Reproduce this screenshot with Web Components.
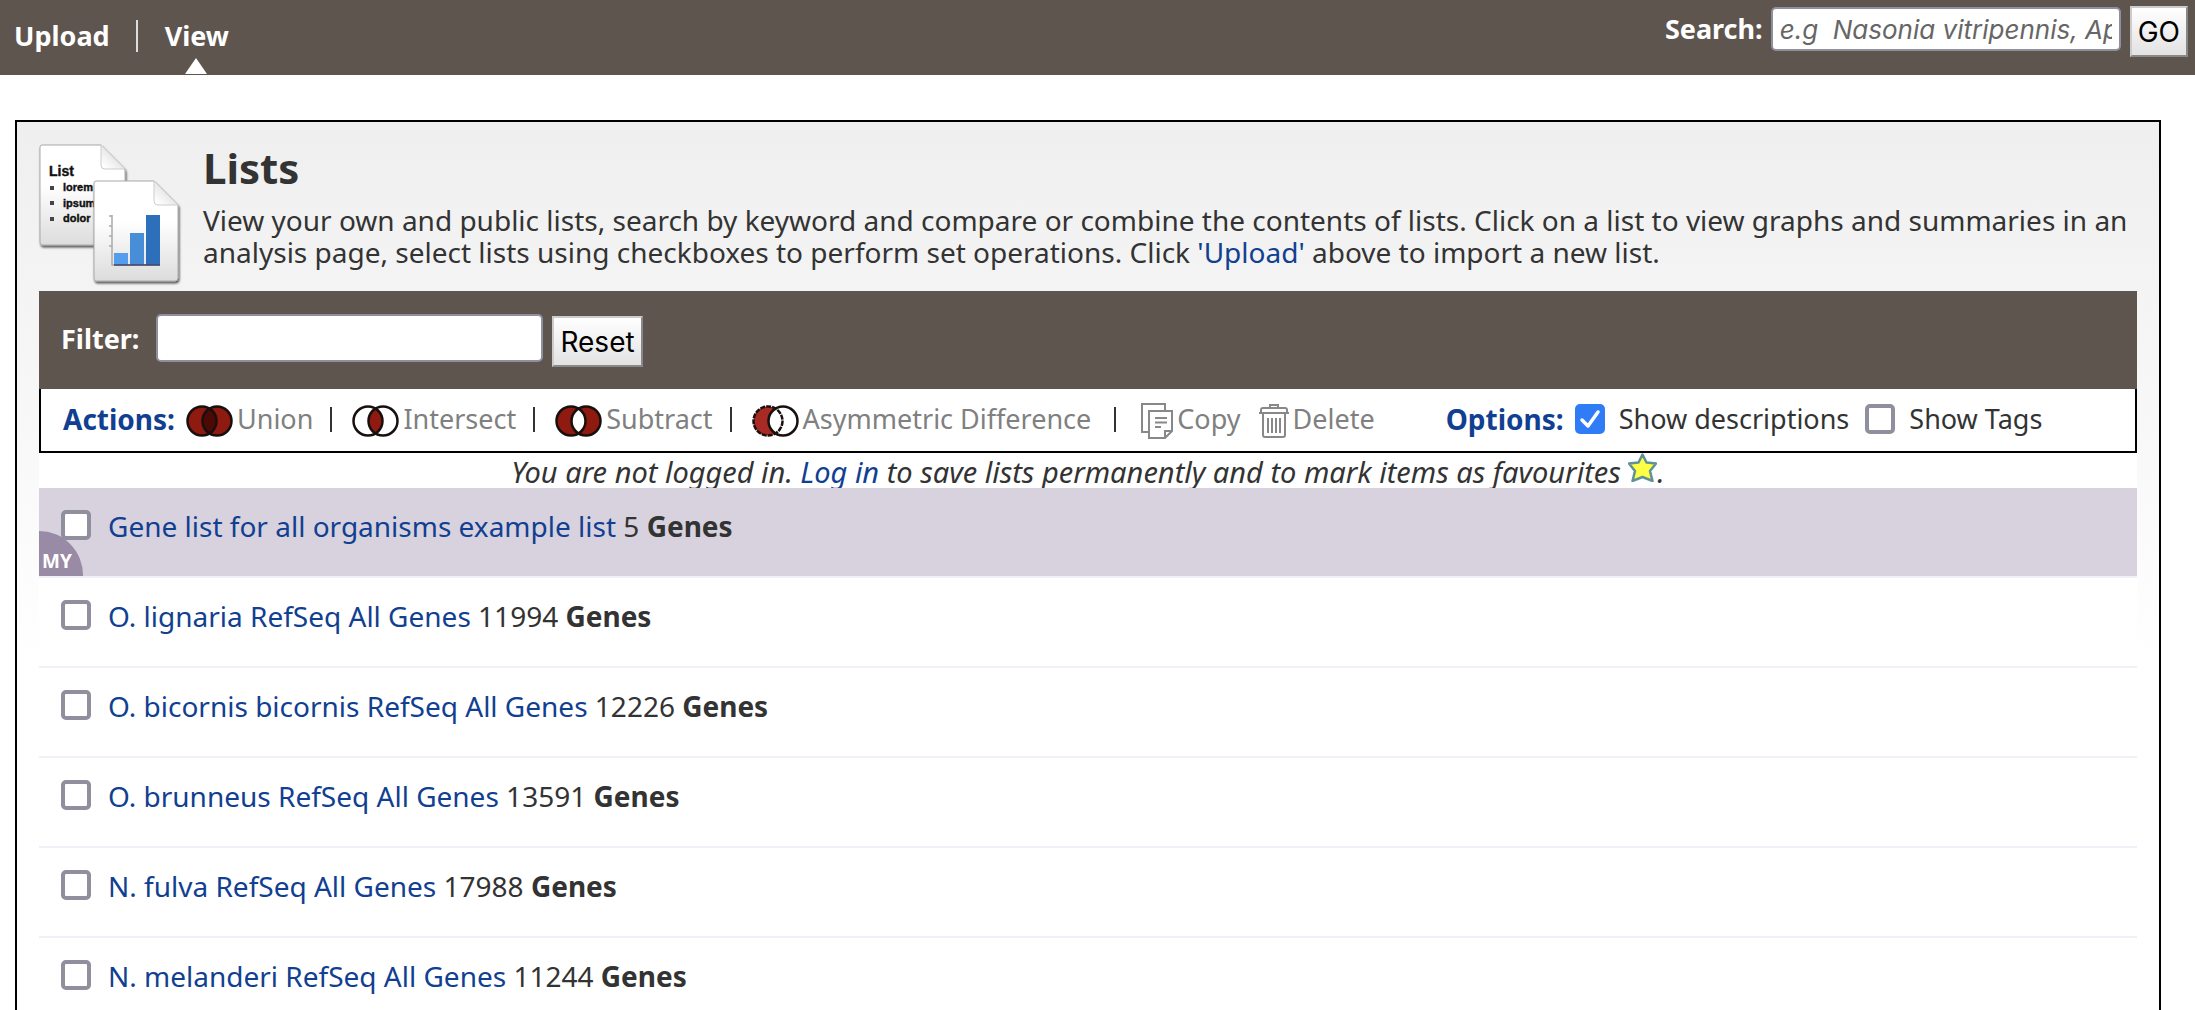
<!DOCTYPE html>
<html lang="en">
<head>
<meta charset="utf-8">
<title>Lists</title>
<style>
html { scrollbar-width: none; }
body {
  margin: 0;
  background: #fff;
  color: #333;
  font: 28px/32px "Noto Sans", "Open Sans", sans-serif;
  --brown: #5f554f;
  --link: #113f91;
  --ui: Inter, "Liberation Sans", sans-serif;
}
</style>
</head>
<body>
<site-header></site-header>
<lists-panel>
  <list-row href="#all" count="5" mine>Gene list for all organisms example list</list-row>
  <list-row href="#lignaria" count="11994">O. lignaria RefSeq All Genes</list-row>
  <list-row href="#bicornis" count="12226">O. bicornis bicornis RefSeq All Genes</list-row>
  <list-row href="#brunneus" count="13591">O. brunneus RefSeq All Genes</list-row>
  <list-row href="#fulva" count="17988">N. fulva RefSeq All Genes</list-row>
  <list-row href="#melanderi" count="11244">N. melanderi RefSeq All Genes</list-row>
</lists-panel>

<script>
const shared = `
  * { box-sizing: border-box; }
  a { color: var(--link); text-decoration: none; }
  button.bevel {
    font: 28px/32px var(--ui); color: #000; height: 51px; padding: 0 6px; margin: 0;
    border: 2px solid; border-color: #ccc #888 #888 #ccc; border-radius: 0;
    background: linear-gradient(#fff, #e2e2e2);
  }
  input.text {
    font: 26px/32px var(--ui); margin: 0; padding: 0 7px; color: #000; background: #fff;
    border: 2px solid #8f8f9d; border-radius: 5px; outline: 0;
  }
  input[type=checkbox] {
    appearance: none; flex: none; width: 30px; height: 30px; margin: 0;
    border: 4px solid #8f8f9d; border-radius: 5px; background: #fff;
  }
  input[type=checkbox]:checked { border: 0; background: #2f7cf6; }
`;

function define(name, html, setup) {
  const template = document.createElement('template');
  template.innerHTML = html;
  customElements.define(name, class extends HTMLElement {
    connectedCallback() {
      if (this.shadowRoot) return;
      const root = this.attachShadow({ mode: 'open' });
      root.append(template.content.cloneNode(true));
      if (setup) setup(this, root);
    }
  });
}

define('site-header', `
  <style>${shared}
    :host { box-sizing: border-box; display: flex; justify-content: space-between; align-items: flex-start; height: 75px; padding: 0 7px 0 14px; background: var(--brown); font-weight: 700; font-size: 27px; color: #fff; }
    nav { display: flex; align-self: stretch; padding-top: 20px; }
    nav a { color: #fff; position: relative; }
    nav a + a { margin-left: 26px; padding-left: 29px; }
    nav a + a::before { content: ""; position: absolute; left: 0; top: 0; width: 2px; height: 32px; background: #ddd; }
    nav svg { position: absolute; left: 49px; top: 38px; }
    form { display: flex; align-items: flex-start; padding-top: 6px; }
    label { padding-top: 7px; margin-right: 8px; }
    input.text { width: 350px; height: 44px; margin: 1px 9px 0 0; }
    input::placeholder { color: #666; opacity: 1; font-style: italic; }
  </style>
  <nav>
    <a href="#upload">Upload</a>
    <a href="#view">View<svg width="22" height="16" viewBox="0 0 22 16"><path d="M11 0 22 16H0Z" fill="#fff"/></svg></a>
  </nav>
  <form>
    <label for="q">Search:</label>
    <input id="q" class="text" type="text" placeholder="e.g&nbsp; Nasonia vitripennis, Apis mellifera">
    <button class="bevel" type="button">GO</button>
  </form>
`);

define('documents-icon', `
  <style>:host { display: block; } svg { display: block; overflow: visible; } text { font-family: "Liberation Sans", sans-serif; font-weight: 700; fill: #111; stroke: #111; stroke-width: .4px; }</style>
  <svg width="142" height="142" viewBox="0 0 142 142" aria-hidden="true">
    <defs>
      <linearGradient id="p" x2="0" y2="1"><stop offset=".4" stop-color="#fff"/><stop offset="1" stop-color="#dcdcdc"/></linearGradient>
      <linearGradient id="f" x1="0" y1="1" x2="1" y2="0"><stop offset=".1" stop-color="#fff"/><stop offset=".7" stop-color="#ddd"/></linearGradient>
      <filter id="s" x="-10%" y="-10%" width="125%" height="125%"><feDropShadow dx="1" dy="2" stdDeviation="1" flood-opacity=".65"/></filter>
    </defs>
    <g filter="url(#s)">
      <path d="M3 1H62L86 26V98q0 3-3 3H3q-2 0-2-3V3q0-2 2-2Z" fill="url(#p)" stroke="#aaa"/>
      <path d="M62 1V21q0 4 4 4H86Z" fill="url(#f)" stroke="#ccc"/>
    </g>
    <text x="10" y="32" font-size="14">List</text>
    <text x="24" y="47" font-size="11">lorem</text>
    <text x="24" y="63" font-size="11">ipsum</text>
    <text x="24" y="78" font-size="11">dolor</text>
    <path d="M11 42h4v4h-4zM11 57h4v4h-4zM11 73h4v4h-4z" fill="#444"/>
    <g filter="url(#s)">
      <path d="M57 37H115L139 61V134q0 3-3 3H57q-2 0-2-3V39q0-2 2-2Z" fill="url(#p)" stroke="#aaa"/>
      <path d="M115 37V57q0 4 4 4H139Z" fill="url(#f)" stroke="#ccc"/>
    </g>
    <path d="M73 71V121H121M70 72h3M70 82h3M70 92h3M70 102h3" fill="none" stroke="#aaa" stroke-width="1.5"/>
    <path d="M75 109h14v12H75z" fill="#559dec"/><path d="M91 89h14v32H91z" fill="#488dd8"/><path d="M107 71h14v50h-14z" fill="#2d6fba"/>
    <path d="M75 121h46" stroke="#446" stroke-width="1.5"/>
  </svg>
`);

const venn = (l, r, lens, dash) => `
  <svg width="47" height="32" viewBox="0 0 47 32" aria-hidden="true">
    <circle cx="16" cy="16" r="14.500" fill="${l}"/><circle cx="31" cy="16" r="14.500" fill="${r}"/>
    <path d="M23.500 3.600a14.500 14.500 0 0 1 0 24.800a14.500 14.500 0 0 1 0-24.800Z" fill="${lens}"/>
    <g fill="none" stroke="#1a0f0f" stroke-width="2.500"><circle cx="16" cy="16" r="14.500" ${dash ? 'stroke-dasharray="5 1"' : ''}/><circle cx="31" cy="16" r="14.500"/></g>
  </svg>`;
const icons = {
  union: venn('#8f1a10', '#8f1a10', '#4d0a05'),
  intersect: venn('#fff', '#fff', '#8f1a10'),
  subtract: venn('#8f1a10', '#8f1a10', '#fff'),
  asymmetric: venn('#a82a24', '#fff', '#fff', true),
  copy: `<svg width="32" height="36" viewBox="0 0 32 36" aria-hidden="true" fill="none" stroke="#888" stroke-width="2">
    <path d="M8 29H1V1H24V8"/><path d="M8 8H31V28L24 35H8Z" fill="#fff"/><path d="M31 28H24V35M14 15H26M14 19.500H26M14 24H20"/></svg>`,
  trash: `<svg width="30" height="34" viewBox="0 0 30 34" aria-hidden="true" fill="none" stroke="#888" stroke-width="2">
    <path d="M11 4V1H19V4M2 9V6Q2 4 4 4H26Q28 4 28 6V9ZM0 9H30M4 9V31Q4 33 6 33H24Q26 33 26 31V9"/><path d="M9 14V29M13 14V29M17 14V29M21 14V29"/></svg>`
};

define('list-action', `
  <style>
    :host { display: block; }
    button { display: flex; align-items: center; gap: 4px; padding: 0; margin: 0; border: 0; background: none; font: inherit; color: #808080; white-space: nowrap; }
    span { padding-top: 3px; }
    svg { display: block; }
  </style>
  <button type="button"><span></span><slot></slot></button>
`, (host, root) => { root.querySelector('span').innerHTML = icons[host.getAttribute('icon')]; });

define('list-row', `
  <style>${shared}
    :host { box-sizing: border-box; display: flex; height: 90px; padding: 20px 22px 0; gap: 17px; align-items: flex-start; position: relative; background: #fff; border-bottom: 2px solid #f0f0fb; }
    :host([mine]) { background: #d8d2de; background-clip: padding-box; }
    p { margin: 2px 0 0; }
    input[type=checkbox] { margin-top: 2px; position: relative; }
    .my { display: none; position: absolute; left: 0; bottom: 0; width: 44px; height: 45px; border-top-right-radius: 44px; background: #998aa5; color: #fff; font: 700 19px/30px "Noto Sans", sans-serif; padding: 15px 0 0 3px; }
    :host([mine]) .my { display: block; }
  </style>
  <span class="my">MY</span>
  <input type="checkbox" id="c">
  <p><a><slot></slot></a> <span class="n"></span> <b>Genes</b></p>
`, (host, root) => {
  root.querySelector('a').href = host.getAttribute('href');
  root.querySelector('input').setAttribute('aria-label', host.textContent);
  root.querySelector('.n').textContent = host.getAttribute('count');
});

define('lists-panel', `
  <style>${shared}
    :host { display: block; box-sizing: border-box; margin: 45px 34px 0 15px; padding: 22px 22px 0; border: 2px solid #000; border-bottom: 0; background: linear-gradient(#efefef, #fff 540px); }
    header { display: flex; gap: 22px; height: 147px; }
    documents-icon { flex: none; }
    h1 { margin: 0; font-size: 42px; line-height: 48px; }
    header p { margin: 12px 0 0; }
    .filter { display: flex; align-items: flex-start; height: 98px; padding: 23px 22px 0; background: var(--brown); color: #fff; font-weight: 700; font-size: 27px; }
    .filter label { margin: 9px 17px 0 0; }
    .filter input { width: 387px; height: 48px; }
    .filter button { margin: 2px 0 0 9px; }
    .tools { display: flex; align-items: center; height: 64px; padding: 0 22px 2px; border: 2px solid #000; border-top: 0; background: #fff; font-size: 27px; }
    .tools strong { color: var(--link); margin-right: 11px; font-size: 28px; }
    .tools i { width: 2px; height: 25px; background: #333; margin: 0 20px 0 17px; }
    .tools i.last { margin: 0 25px 0 23px; }
    list-action + list-action { margin-left: 18px; }
    .options { display: flex; align-items: center; margin-left: 71px; }
    .options label { display: flex; align-items: center; margin-right: 16px; gap: 14px; white-space: nowrap; }
    .check { display: grid; }
    .check > * { grid-area: 1 / 1; }
    .check svg { pointer-events: none; z-index: 1; }
    .note { margin: 0; height: 35px; padding-top: 3px; text-align: center; font-style: italic; font-size: 29px; background: #fff; }
    .note svg { vertical-align: 1px; margin-top: -3px; }
  </style>
  <header>
    <documents-icon></documents-icon>
    <div>
      <h1>Lists</h1>
      <p>View your own and public lists, search by keyword and compare or combine the contents of lists. Click on a list to view graphs and summaries in an<br>analysis page, select lists using checkboxes to perform set operations. Click <a href="#upload">'Upload'</a> above to import a new list.</p>
    </div>
  </header>
  <div class="filter">
    <label for="f">Filter:</label>
    <input id="f" class="text" type="text">
    <button class="bevel" type="button">Reset</button>
  </div>
  <div class="tools">
    <strong>Actions:</strong>
    <list-action icon="union">Union</list-action><i></i>
    <list-action icon="intersect">Intersect</list-action><i></i>
    <list-action icon="subtract">Subtract</list-action><i></i>
    <list-action icon="asymmetric">Asymmetric Difference</list-action><i class="last"></i>
    <list-action icon="copy">Copy</list-action>
    <list-action icon="trash">Delete</list-action>
    <div class="options">
      <strong>Options:</strong>
      <label><span class="check"><input type="checkbox" checked><svg width="30" height="30" viewBox="0 0 30 30" aria-hidden="true"><path d="M7 16l6 6L23 8" fill="none" stroke="#fff" stroke-width="3.500" stroke-linecap="round" stroke-linejoin="round"/></svg></span>Show descriptions</label>
      <label><input type="checkbox">Show Tags</label>
    </div>
  </div>
  <p class="note">You are not logged in. <a href="#login">Log in</a> to save lists permanently and to mark items as favourites <svg width="29" height="29" viewBox="0 0 29 29" aria-hidden="true"><path d="M14.500 1.500 18.500 9.500 28 10.500 22 18 24.500 28 14.500 24 4.500 28 7 18 1 10.500 10.500 9.500Z" fill="#ff4" stroke="#5f9296" stroke-width="2.500" stroke-linejoin="round"/></svg>.</p>
  <slot></slot>
`);
</script>
</body>
</html>
